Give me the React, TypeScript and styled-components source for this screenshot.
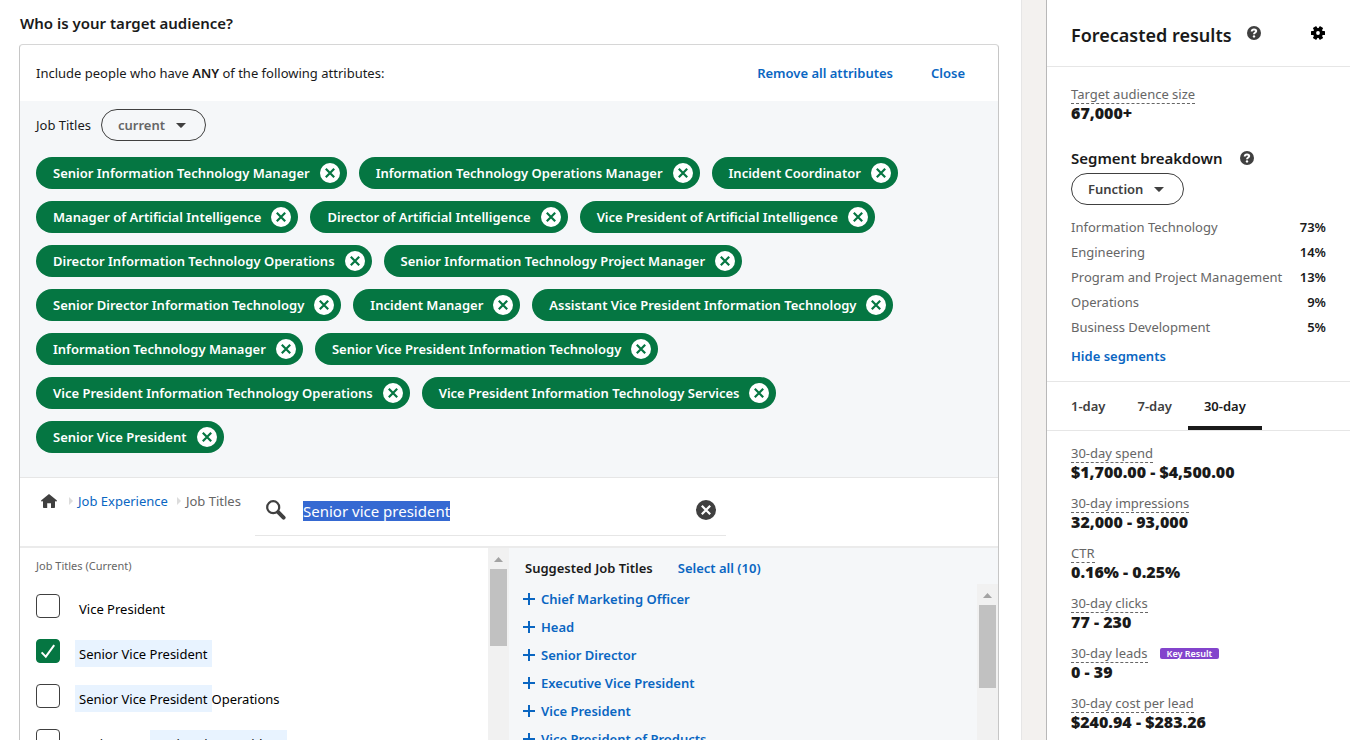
import React, { useEffect, useRef, useState } from "react";
import styled, { createGlobalStyle } from "styled-components";

const ink = "#1a1a1a";
const muted = "#666666";
const icon = "#404040";
const blue = "#0a66c2";
const green = "#057642";
const panel = "#f5f7f9";
const line = "#e6e6e6";
const sans = '"Noto Sans", "Open Sans", sans-serif';

const GlobalStyle = createGlobalStyle`
  *, *::before, *::after { box-sizing: border-box; }
  body {
    margin: 0;
    background: #f3f1ef;
    color: ${ink};
    font: 400 13px/20px ${sans};
  }
  button, input, select { font: inherit; color: inherit; margin: 0; }
  h1, h2, h3, p, ul, ol, dl, dd { margin: 0; padding: 0; list-style: none; }
`;

/* ---------- page ---------- */

const Page = styled.div`
  display: flex;
  gap: 24px;
  height: 100vh;
  overflow: hidden;
`;

const Main = styled.main`
  flex: 1;
  min-width: 0;
  display: flex;
  flex-direction: column;
  padding: 13px 22px 0 19px;
  background: #fff;
  border-right: 1px solid ${line};
`;

const PageTitle = styled.h1`
  margin-bottom: 11px;
  padding-left: 1px;
  font-size: 15px;
  line-height: 20px;
  font-weight: 600;
`;

const Card = styled.section`
  flex: 1;
  min-height: 0;
  display: flex;
  flex-direction: column;
  border: 1px solid #c6c6c6;
  border-top-color: #d6d6d6;
  border-bottom: 0;
  border-radius: 4px 4px 0 0;
`;

const CardHeader = styled.header`
  display: flex;
  align-items: center;
  gap: 38px;
  height: 56px;
  padding: 0 33px 0 16px;
`;

const CardIntro = styled.p`
  flex: 1;
`;

const Strong = styled.strong`
  font-weight: 600;
`;

const TextButton = styled.button`
  padding: 0;
  border: 0;
  background: none;
  color: ${blue};
  font-weight: 600;
  line-height: 20px;
  text-align: left;
  cursor: pointer;
`;

/* ---------- pill drop-down ---------- */

const PillWrap = styled.span`
  display: inline-grid;
  align-items: center;
`;

const PillSelect = styled.select<{ $color: string }>`
  grid-area: 1 / 1;
  appearance: none;
  height: 32px;
  padding: 0 39px 0 16px;
  border: 1px solid ${icon};
  border-radius: 16px;
  background: transparent;
  color: ${(p) => p.$color};
  font-weight: 600;
`;

const PillCaret = styled.svg`
  grid-area: 1 / 1;
  justify-self: end;
  margin-right: 20px;
  pointer-events: none;
`;

function Pill({ id, label, value, color }: { id: string; label: string; value: string; color: string }) {
  return (
    <PillWrap>
      <PillSelect id={id} aria-label={label} $color={color} defaultValue={value}>
        <option>{value}</option>
      </PillSelect>
      <PillCaret width="10" height="5" viewBox="0 0 10 5" aria-hidden="true">
        <path d="M0 0h10L5.4 4.8h-.8z" fill={icon} />
      </PillCaret>
    </PillWrap>
  );
}

/* ---------- selected attributes ---------- */

const Selected = styled.div`
  padding: 8px 33px 24px 16px;
  background: ${panel};
  border-bottom: 1px solid ${line};
`;

const FacetRow = styled.div`
  display: flex;
  align-items: center;
  gap: 10px;
  margin-bottom: 16px;
`;

const ChipList = styled.ul`
  display: flex;
  flex-wrap: wrap;
  gap: 12px;
`;

const Chip = styled.li`
  display: flex;
  align-items: center;
  gap: 10px;
  height: 32px;
  padding: 0 7px 0 17px;
  border-radius: 16px;
  background: ${green};
  color: #fff;
  font-weight: 600;
  white-space: nowrap;
`;

const IconButton = styled.button`
  display: flex;
  flex: none;
  padding: 0;
  border: 0;
  background: none;
  cursor: pointer;
`;

function RoundCross({ disc, cross }: { disc: string; cross: string }) {
  return (
    <svg width="20" height="20" viewBox="0 0 20 20" aria-hidden="true">
      <circle cx="10" cy="10" r="10" fill={disc} />
      <path d="M5.8 5.8l8.4 8.4M14.2 5.8l-8.4 8.4" stroke={cross} strokeWidth="2.2" fill="none" />
    </svg>
  );
}

/* ---------- breadcrumb and search ---------- */

const SearchRow = styled.div`
  display: flex;
  flex: none;
  height: 70px;
  border-bottom: 2px solid #ebebeb;
`;

const Crumbs = styled.nav`
  display: flex;
  flex: none;
  align-items: center;
  width: 235px;
  height: 46px;
  padding-left: 21px;
  white-space: nowrap;
  color: ${muted};
`;

const CrumbLink = styled.a`
  display: flex;
  color: ${blue};
  text-decoration: none;
`;

const CrumbMark = styled.svg<{ $lead?: boolean }>`
  flex: none;
  margin: 0 5px 0 ${(p) => (p.$lead ? 12 : 9)}px;
`;

const SearchBox = styled.div`
  display: flex;
  flex: 0 1 471px;
  align-items: center;
  height: 58px;
  padding: 6px 10px 0 11px;
  border-bottom: 1px solid ${line};
`;

const SearchInput = styled.input`
  flex: 1;
  min-width: 0;
  height: 24px;
  margin: 3px 16px 0 17px;
  padding: 0;
  border: 0;
  outline: 0;
  background: none;
  font-size: 15px;
  &::selection {
    background: rgba(51, 103, 209, 0.99);
    color: #fff;
  }
`;

/* ---------- result columns ---------- */

const Columns = styled.div`
  flex: 1;
  min-height: 0;
  display: grid;
  grid-template-columns: 1fr 1fr;
  grid-template-rows: minmax(0, 1fr);
`;

const Column = styled.div<{ $tint?: boolean }>`
  display: flex;
  flex-direction: column;
  min-height: 0;
  background: ${(p) => (p.$tint ? panel : "#fff")};
`;

const Scroller = styled.div`
  flex: 1;
  min-height: 0;
  display: flex;
`;

const ScrollBody = styled.div`
  flex: 1;
  min-width: 0;
  overflow: hidden;
`;

const Track = styled.div`
  display: flex;
  flex: none;
  flex-direction: column;
  align-items: center;
  width: 21px;
  background: #f1f1f1;
`;

const TrackArrow = styled.svg`
  flex: none;
  margin: 9px 0 7px;
`;

const Thumb = styled.div<{ $size: number }>`
  flex: none;
  width: 17px;
  height: ${(p) => p.$size}px;
  background: #c1c1c1;
`;

function ScrollTrack({ size }: { size: number }) {
  return (
    <Track aria-hidden="true">
      <TrackArrow width="9" height="5" viewBox="0 0 9 5">
        <path d="M0 5L4.5 0 9 5z" fill="#a3a3a3" />
      </TrackArrow>
      <Thumb $size={size} />
    </Track>
  );
}

const ListCaption = styled.h2`
  padding: 8px 16px 0;
  font-size: 11px;
  line-height: 20px;
  font-weight: 400;
  color: ${muted};
`;

const CheckList = styled.ul`
  display: grid;
  gap: 18px;
  padding: 18px 16px 0;
`;

const CheckRow = styled.li`
  display: flex;
  gap: 15px;
  height: 27px;
`;

const CheckWrap = styled.span`
  display: grid;
  flex: none;
  width: 24px;
  height: 24px;
`;

const CheckInput = styled.input`
  grid-area: 1 / 1;
  appearance: none;
  width: 24px;
  height: 24px;
  border: 1px solid ${icon};
  border-radius: 4px;
  background: #fff;
  &:checked {
    border-color: ${green};
    background: ${green};
  }
`;

const CheckMark = styled.svg`
  grid-area: 1 / 1;
  pointer-events: none;
`;

const CheckLabel = styled.label`
  display: flex;
  height: 27px;
  margin-top: 1px;
  line-height: 29px;
  color: #000;
  white-space: nowrap;
`;

const Lead = styled.span`
  padding: 0 16px 0 4px;
`;

const Match = styled.mark`
  padding: 0 4px;
  background: #e8f3ff;
  color: inherit;
`;

const SuggestHeader = styled.div`
  display: flex;
  gap: 25px;
  padding: 10px 16px 6px;
`;

const SuggestTitle = styled.h2`
  font-size: 13px;
  line-height: 20px;
  font-weight: 600;
  color: ${ink};
`;

const SuggestList = styled.ul`
  padding: 1px 14px 0;
`;

const SuggestButton = styled(TextButton)`
  display: flex;
  align-items: center;
  gap: 6px;
  height: 28px;
  white-space: nowrap;
`;

/* ---------- forecast ---------- */

const Aside = styled.aside`
  flex: 0 0 304px;
  overflow: hidden;
  background: #fff;
  border-left: 1px solid #b8b8b8;
`;

const AsideHeader = styled.header`
  display: flex;
  align-items: center;
  gap: 15px;
  height: 67px;
  padding: 0 24px;
  border-bottom: 1px solid ${line};
`;

const AsideTitle = styled.h2`
  padding-top: 3px;
  font-size: 18px;
  line-height: 24px;
  font-weight: 600;
`;

const Spacer = styled.span`
  flex: 1;
`;

const AsideSection = styled.section<{ $top: number; $bottom: number }>`
  padding: ${(p) => p.$top}px 24px ${(p) => p.$bottom}px;
`;

const Term = styled.dt`
  display: flex;
  align-items: center;
  gap: 12px;
  color: ${muted};
`;

const TermText = styled.span`
  height: 19px;
  border-bottom: 1px dashed ${muted};
  line-height: 18px;
`;

const Value = styled.dd`
  font-size: 16px;
  line-height: 18px;
  font-weight: 900;
`;

const Metrics = styled.dl`
  display: grid;
  gap: 13px;
`;

const Badge = styled.span`
  padding: 0 7px;
  border-radius: 2px;
  background: #8344cc;
  color: #fff;
  font-size: 9px;
  line-height: 11px;
  font-weight: 600;
`;

const SegmentHeader = styled.div`
  display: flex;
  align-items: center;
  gap: 17px;
  margin: 26px 0 5px;
`;

const SegmentTitle = styled.h3`
  font-size: 15px;
  line-height: 20px;
  font-weight: 600;
`;

const SegmentTable = styled.table`
  width: 100%;
  margin: 9px 0 7px;
  border-collapse: collapse;
`;

const SegmentName = styled.th`
  height: 25px;
  padding: 0;
  color: ${muted};
  font-weight: 400;
  text-align: left;
  white-space: nowrap;
`;

const SegmentShare = styled.td`
  padding: 0;
  font-weight: 600;
  text-align: right;
`;

const Tabs = styled.div`
  display: flex;
  height: 50px;
  padding-left: 8px;
  border: solid ${line};
  border-width: 1px 0;
`;

const Tab = styled.button<{ $on: boolean }>`
  height: 48px;
  padding: 4px 16px 0;
  border: 0;
  border-bottom: 4px solid ${(p) => (p.$on ? ink : "transparent")};
  background: none;
  color: ${(p) => (p.$on ? ink : icon)};
  font-weight: 600;
  cursor: pointer;
`;

function HelpIcon() {
  return (
    <svg width="14" height="14" viewBox="0 0 14 14" aria-hidden="true">
      <circle cx="7" cy="7" r="7" fill={icon} />
      <path d="M4.7 5.5C4.8 4 5.8 3.5 7 3.5c1.3 0 2.2.6 2.2 1.6 0 1.4-2.2 1.4-2.2 3.1" fill="none" stroke="#fff" strokeWidth="2" />
      <circle cx="7" cy="10.4" r="1.2" fill="#fff" />
    </svg>
  );
}

function GearIcon() {
  return (
    <svg width="15" height="14" viewBox="0 0 15 14" aria-hidden="true">
      {[0, 60, 120].map((a) => (
        <rect key={a} x="0" y="5" width="14" height="4" rx="0.6" transform={`rotate(${a} 7 7)`} />
      ))}
      <circle cx="7" cy="7" r="5.1" />
      <circle cx="7" cy="7" r="1.9" fill="#fff" />
    </svg>
  );
}

function HomeIcon() {
  return (
    <svg width="16" height="14" viewBox="0 0 16 14" aria-hidden="true">
      <path d="M8 0l8 6.6-.8 1.2L14 7v6.2a.8.8 0 0 1-.8.8H10V9.2H6.2V14H2.8a.8.8 0 0 1-.8-.8V7l-1.2.8L0 6.6z" fill={icon} />
    </svg>
  );
}

function SearchIcon() {
  return (
    <svg width="20" height="20" viewBox="0 0 20 20" aria-hidden="true">
      <circle cx="7.2" cy="7.2" r="6" fill="none" stroke={icon} strokeWidth="2.2" />
      <path d="M12.2 12.2l5.4 5.4" stroke={icon} strokeWidth="4" strokeLinecap="round" />
    </svg>
  );
}

function CrumbArrow({ lead }: { lead?: boolean }) {
  return (
    <CrumbMark $lead={lead} width="4" height="8" viewBox="0 0 4 8" aria-hidden="true">
      <path d="M0 0l4 4-4 4z" fill="#dcdcdc" />
    </CrumbMark>
  );
}

function PlusIcon() {
  return (
    <svg width="12" height="12" viewBox="0 0 12 12" aria-hidden="true">
      <path d="M6 0v12M0 6h12" stroke={blue} strokeWidth="2" />
    </svg>
  );
}

/* ---------- data ---------- */

const chosenTitles = [
  "Senior Information Technology Manager",
  "Information Technology Operations Manager",
  "Incident Coordinator",
  "Manager of Artificial Intelligence",
  "Director of Artificial Intelligence",
  "Vice President of Artificial Intelligence",
  "Director Information Technology Operations",
  "Senior Information Technology Project Manager",
  "Senior Director Information Technology",
  "Incident Manager",
  "Assistant Vice President Information Technology",
  "Information Technology Manager",
  "Senior Vice President Information Technology",
  "Vice President Information Technology Operations",
  "Vice President Information Technology Services",
  "Senior Vice President",
];

const results = [
  { id: "vp", lead: "Vice President", match: "", tail: "", on: false },
  { id: "svp", lead: "", match: "Senior Vice President", tail: "", on: true },
  { id: "svp-ops", lead: "", match: "Senior Vice President", tail: "Operations", on: false },
  { id: "asvp", lead: "Assistant", match: "Senior Vice President", tail: "", on: false },
];

const suggestions = [
  "Chief Marketing Officer",
  "Head",
  "Senior Director",
  "Executive Vice President",
  "Vice President",
  "Vice President of Products",
];

const segments = [
  ["Information Technology", "73%"],
  ["Engineering", "14%"],
  ["Program and Project Management", "13%"],
  ["Operations", "9%"],
  ["Business Development", "5%"],
];

const metrics = [
  { name: "30-day spend", value: "$1,700.00 - $4,500.00" },
  { name: "30-day impressions", value: "32,000 - 93,000" },
  { name: "CTR", value: "0.16% - 0.25%" },
  { name: "30-day clicks", value: "77 - 230" },
  { name: "30-day leads", value: "0 - 39", key: true },
  { name: "30-day cost per lead", value: "$240.94 - $283.26" },
];

export default function App() {
  const search = useRef<HTMLInputElement>(null);
  const [period, setPeriod] = useState("30-day");

  useEffect(() => {
    search.current?.focus();
    search.current?.select();
  }, []);

  return (
    <Page>
      <GlobalStyle />
      <Main>
        <PageTitle>Who is your target audience?</PageTitle>
        <Card>
          <CardHeader>
            <CardIntro>
              Include people who have <Strong>ANY</Strong> of the following attributes:
            </CardIntro>
            <TextButton type="button">Remove all attributes</TextButton>
            <TextButton type="button">Close</TextButton>
          </CardHeader>

          <Selected>
            <FacetRow>
              <label htmlFor="tense">Job Titles</label>
              <Pill id="tense" label="Job Titles" value="current" color={muted} />
            </FacetRow>
            <ChipList>
              {chosenTitles.map((title) => (
                <Chip key={title}>
                  {title}
                  <IconButton type="button" aria-label={`Remove ${title}`}>
                    <RoundCross disc="#fff" cross={green} />
                  </IconButton>
                </Chip>
              ))}
            </ChipList>
          </Selected>

          <SearchRow>
            <Crumbs aria-label="Breadcrumb">
              <CrumbLink href="#home" aria-label="Home">
                <HomeIcon />
              </CrumbLink>
              <CrumbArrow lead />
              <CrumbLink href="#job-experience">Job Experience</CrumbLink>
              <CrumbArrow />
              <span>Job Titles</span>
            </Crumbs>
            <SearchBox>
              <SearchIcon />
              <SearchInput ref={search} type="text" aria-label="Search" defaultValue="Senior vice president" />
              <IconButton type="button" aria-label="Clear search">
                <RoundCross disc={icon} cross="#fff" />
              </IconButton>
            </SearchBox>
          </SearchRow>

          <Columns>
            <Column>
              <Scroller>
                <ScrollBody>
                  <ListCaption>Job Titles (Current)</ListCaption>
                  <CheckList>
                    {results.map((r) => (
                      <CheckRow key={r.id}>
                        <CheckWrap>
                          <CheckInput type="checkbox" id={r.id} defaultChecked={r.on} />
                          {r.on && (
                            <CheckMark width="24" height="24" viewBox="0 0 24 24" aria-hidden="true">
                              <path d="M5.6 13.4l4.2 4.2L18.2 6.2" fill="none" stroke="#fff" strokeWidth="2" />
                            </CheckMark>
                          )}
                        </CheckWrap>
                        <CheckLabel htmlFor={r.id}>
                          {r.lead && <Lead>{r.lead}</Lead>}
                          {r.match && <Match>{r.match}</Match>}
                          {r.tail}
                        </CheckLabel>
                      </CheckRow>
                    ))}
                  </CheckList>
                </ScrollBody>
                <ScrollTrack size={77} />
              </Scroller>
            </Column>

            <Column $tint>
              <SuggestHeader>
                <SuggestTitle>Suggested Job Titles</SuggestTitle>
                <TextButton type="button">Select all (10)</TextButton>
              </SuggestHeader>
              <Scroller>
                <ScrollBody>
                  <SuggestList>
                    {suggestions.map((s) => (
                      <li key={s}>
                        <SuggestButton type="button">
                          <PlusIcon />
                          {s}
                        </SuggestButton>
                      </li>
                    ))}
                  </SuggestList>
                </ScrollBody>
                <ScrollTrack size={83} />
              </Scroller>
            </Column>
          </Columns>
        </Card>
      </Main>

      <Aside>
        <AsideHeader>
          <AsideTitle>Forecasted results</AsideTitle>
          <IconButton type="button" aria-label="About forecasted results">
            <HelpIcon />
          </IconButton>
          <Spacer />
          <IconButton type="button" aria-label="Settings">
            <GearIcon />
          </IconButton>
        </AsideHeader>

        <AsideSection $top={18} $bottom={15}>
          <dl>
            <Term>
              <TermText>Target audience size</TermText>
            </Term>
            <Value>67,000+</Value>
          </dl>
          <SegmentHeader>
            <SegmentTitle>Segment breakdown</SegmentTitle>
            <IconButton type="button" aria-label="About segment breakdown">
              <HelpIcon />
            </IconButton>
          </SegmentHeader>
          <Pill id="segment" label="Segment by" value="Function" color={icon} />
          <SegmentTable>
            <tbody>
              {segments.map(([name, share]) => (
                <tr key={name}>
                  <SegmentName scope="row">{name}</SegmentName>
                  <SegmentShare>{share}</SegmentShare>
                </tr>
              ))}
            </tbody>
          </SegmentTable>
          <TextButton type="button">Hide segments</TextButton>
        </AsideSection>

        <Tabs role="tablist">
          {["1-day", "7-day", "30-day"].map((t) => (
            <Tab key={t} type="button" role="tab" aria-selected={t === period} $on={t === period} onClick={() => setPeriod(t)}>
              {t}
            </Tab>
          ))}
        </Tabs>

        <AsideSection $top={13} $bottom={16}>
          <Metrics>
            {metrics.map((m) => (
              <div key={m.name}>
                <Term>
                  <TermText>{m.name}</TermText>
                  {m.key && <Badge>Key Result</Badge>}
                </Term>
                <Value>{m.value}</Value>
              </div>
            ))}
          </Metrics>
        </AsideSection>
      </Aside>
    </Page>
  );
}
